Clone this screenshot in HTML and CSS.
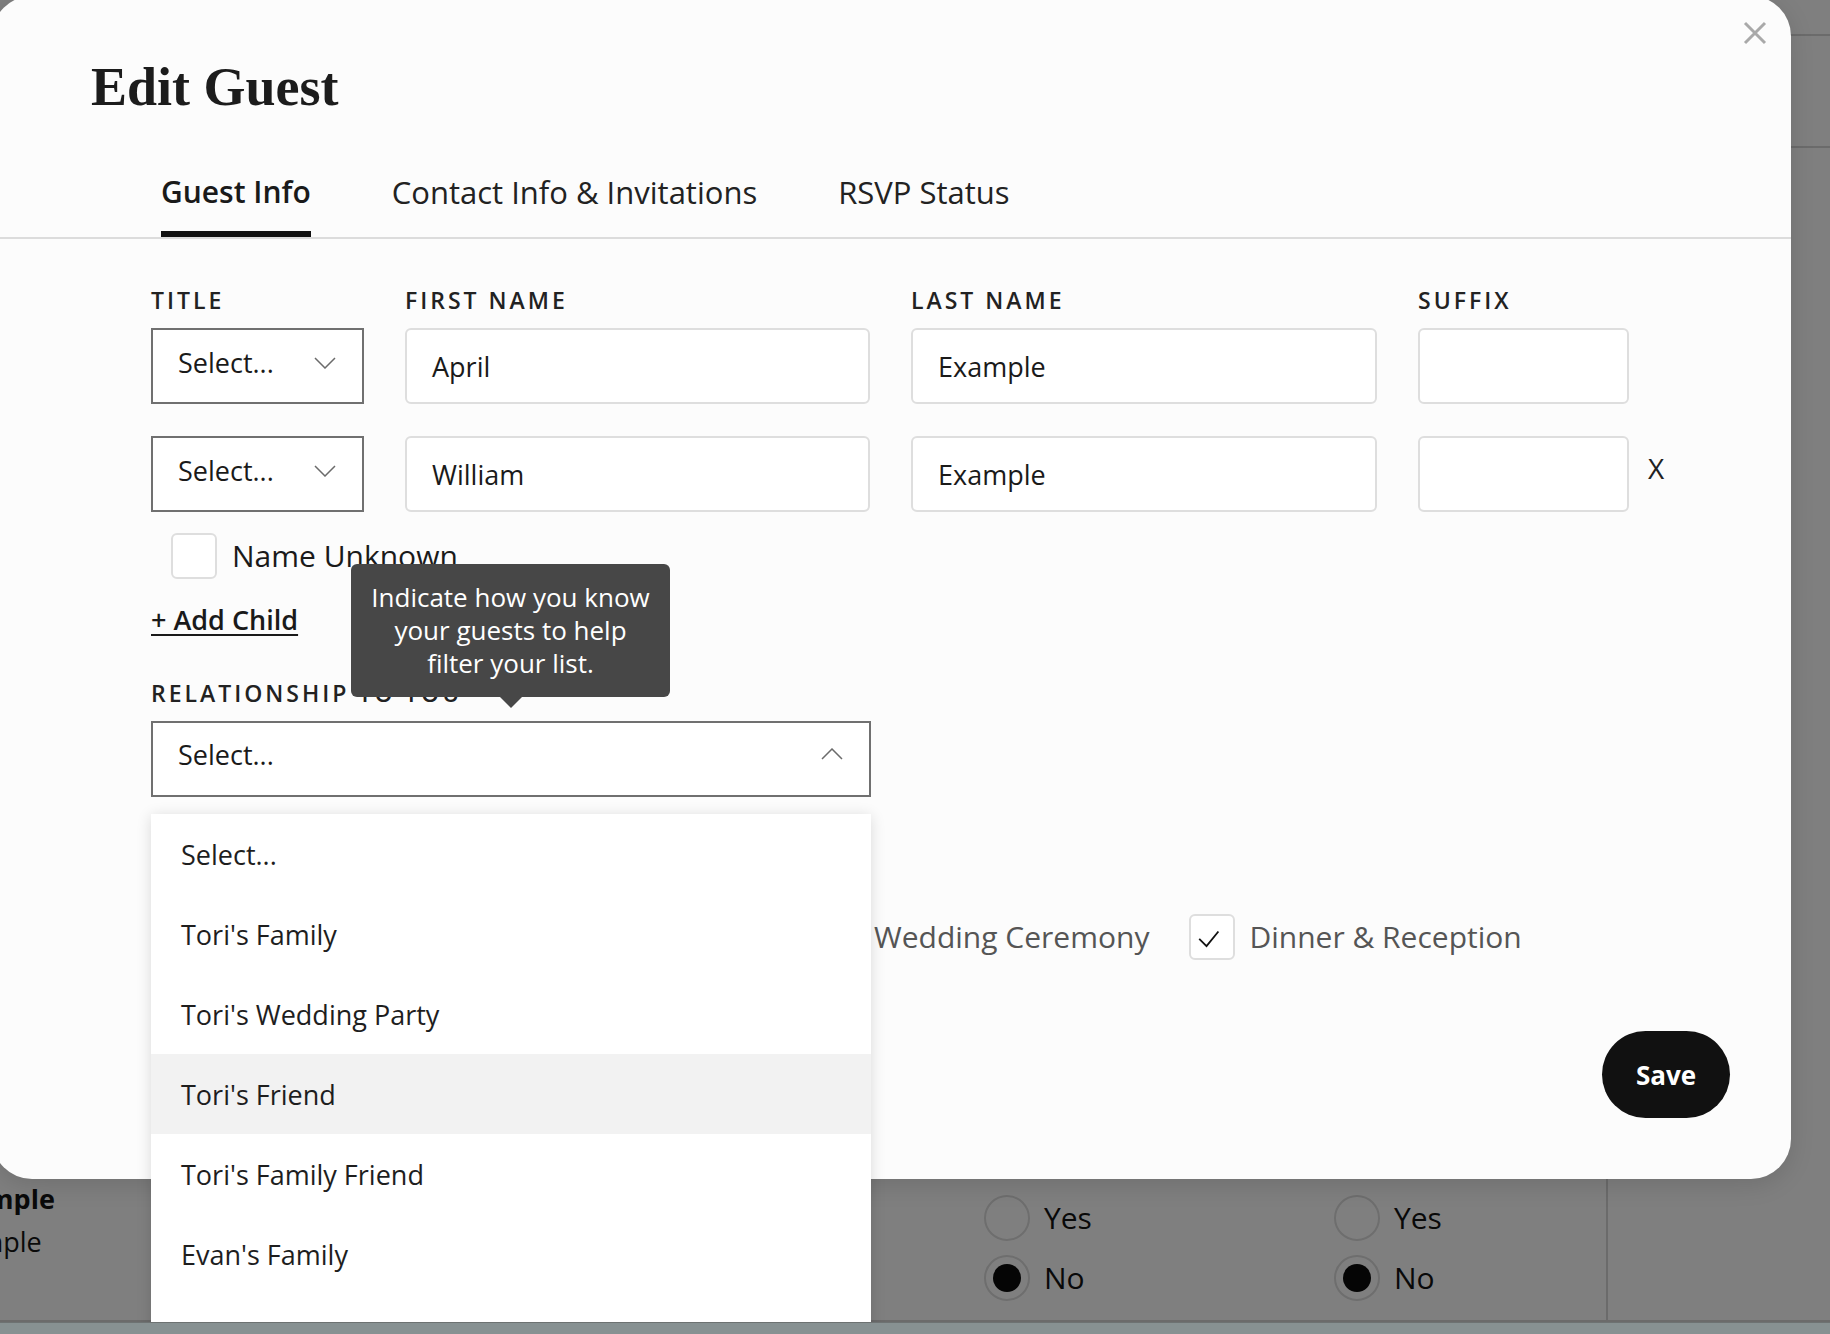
FILE: index.html
```html
<!DOCTYPE html>
<html lang="en">
<head>
<meta charset="utf-8">
<title>Edit Guest</title>
<link rel="stylesheet" href="styles.css">
</head>
<body>
<div class="page">
  <div class="page-row head-row"></div>
  <div class="page-row sub-row"></div>
  <div class="page-row guest-row">
    <div class="g-name">
      <div class="g-primary">Example</div>
      <div class="g-secondary">Example</div>
    </div>
    <div class="rsvp">
      <div class="radio-opt"><span class="radio"></span>Yes</div>
      <div class="radio-opt"><span class="radio on"></span>No</div>
    </div>
    <div class="rsvp">
      <div class="radio-opt"><span class="radio"></span>Yes</div>
      <div class="radio-opt"><span class="radio on"></span>No</div>
    </div>
    <div class="g-end"></div>
  </div>
</div>
<div class="overlay"></div>

<div class="modal">
  <svg class="close" viewBox="0 0 24 24" width="24" height="24"><path d="M2 2 L22 22 M22 2 L2 22" stroke="#a9a9a9" stroke-width="3" fill="none"/></svg>
  <div class="modal-header">
    <h1 class="modal-title">Edit Guest</h1>
  </div>
  <nav class="tabs">
    <div class="tab active">Guest Info</div>
    <div class="tab">Contact Info &amp; Invitations</div>
    <div class="tab">RSVP Status</div>
  </nav>
  <div class="form">
    <div class="grid labels">
      <div class="label">Title</div>
      <div class="label">First Name</div>
      <div class="label">Last Name</div>
      <div class="label">Suffix</div>
    </div>
    <div class="grid name-row">
      <div class="field select"><span>Select...</span><svg class="chev" viewBox="0 0 22 12" width="22" height="12"><polyline points="1,1 11,11 21,1" fill="none" stroke="#6b6b6b" stroke-width="1.5"/></svg></div>
      <div class="field">April</div>
      <div class="field">Example</div>
      <div class="field"></div>
    </div>
    <div class="grid name-row">
      <div class="field select"><span>Select...</span><svg class="chev" viewBox="0 0 22 12" width="22" height="12"><polyline points="1,1 11,11 21,1" fill="none" stroke="#6b6b6b" stroke-width="1.5"/></svg></div>
      <div class="field">William</div>
      <div class="field">Example</div>
      <div class="field"></div>
      <div class="remove">X</div>
    </div>
    <div class="unknown"><span class="checkbox"></span>Name Unknown</div>
    <div class="add-child-row"><span class="add-child">+ Add Child</span></div>
    <div class="rel-field">
      <div class="label rel-label">Relationship to you</div>
      <div class="tooltip">Indicate how you know<br>your guests to help<br>filter your list.</div>
      <div class="rel-select-wrap">
        <div class="field select rel-select"><span>Select...</span><svg class="chev" viewBox="0 0 22 12" width="22" height="12"><polyline points="1,11 11,1 21,11" fill="none" stroke="#6b6b6b" stroke-width="1.5"/></svg></div>
        <div class="menu">
          <div class="menu-item">Select...</div>
          <div class="menu-item">Tori's Family</div>
          <div class="menu-item">Tori's Wedding Party</div>
          <div class="menu-item hover">Tori's Friend</div>
          <div class="menu-item">Tori's Family Friend</div>
          <div class="menu-item">Evan's Family</div>
        </div>
      </div>
    </div>
    <div class="events">
      <div class="event"><span class="checkbox"></span>Wedding Ceremony</div>
      <div class="event"><span class="checkbox"><svg viewBox="0 0 46 46" width="42" height="42"><polyline points="9,25 17,33 30,17" fill="none" stroke="#111" stroke-width="2"/></svg></span>Dinner &amp; Reception</div>
    </div>
  </div>
  <div class="footer">
    <button class="save">Save</button>
  </div>
</div>
<div class="statusbar"></div>
</body>
</html>
```

FILE: styles.css
```css
* { box-sizing: border-box; margin: 0; padding: 0; }
html, body { width: 1830px; height: 1334px; overflow: hidden; }
body {
  position: relative;
  background: #fff;
  font-family: "Open Sans", "Noto Sans", sans-serif;
  color: #1a1a1a;
}

/* background page */
.page { width: 1890px; margin-left: -60px; display: flex; flex-direction: column; background: #fff; }
.page-row { border-bottom: 2px solid #d6d6d6; }
.head-row { height: 36px; }
.sub-row { height: 112px; }
.guest-row {
  height: 1174px;
  display: grid;
  grid-template-columns: 1044px 350px 272px 1fr;
  align-items: end;
}
.g-name { padding-bottom: 60px; color: #141414; }
.g-primary { font-size: 27px; font-weight: 700; line-height: 36px; margin-bottom: 7px; }
.g-secondary { font-size: 27px; line-height: 36px; margin-left: -6px; }
.rsvp { display: flex; flex-direction: column; gap: 14px; padding-bottom: 19px; }
.radio-opt { display: flex; align-items: center; gap: 14px; font-size: 30px; line-height: 46px; color: #121212; }
.radio { width: 46px; height: 46px; border-radius: 50%; border: 2px solid #dcdcdc; background: #fff; display: flex; align-items: center; justify-content: center; }
.radio.on::after { content: ""; width: 28px; height: 28px; border-radius: 50%; background: #0a0a0a; }
.g-end { align-self: stretch; border-left: 2px solid #d6d6d6; }

.overlay { position: absolute; inset: 0; background: rgba(0, 0, 0, 0.5); z-index: 1; }
.statusbar {
  position: absolute; left: 0; right: 0; bottom: 0; height: 12px;
  background: #879192; border-top: 1px solid #6d7272; z-index: 5;
}

/* modal */
.modal {
  position: absolute; left: -8px; top: -4px;
  width: 1799px; height: 1183px;
  background: #fcfcfc;
  border-radius: 40px;
  display: flex; flex-direction: column;
  box-shadow: 0 6px 24px rgba(0, 0, 0, 0.12);
  z-index: 2;
}
.close { position: absolute; top: 25px; right: 24px; }
.modal-header { padding: 64px 0 0 99px; }
.modal-title {
  font-family: "Liberation Serif", "Times New Roman", serif;
  font-weight: 700; font-size: 54px; line-height: 54px; color: #1c1c1c;
}
.tabs { display: flex; gap: 81px; margin-top: 58px; padding-left: 169px; border-bottom: 2px solid #dcdcdc; }
.tab { font-size: 31px; line-height: 40px; padding-bottom: 19px; border-bottom: 6px solid transparent; color: #222; }
.tab.active { font-weight: 600; border-bottom-color: #111; color: #1a1a1a; font-size: 30px; }

.form { padding: 46px 0 0 159px; }
.grid { display: grid; grid-template-columns: 213px 465px 466px 211px auto; column-gap: 41px; align-items: center; }
.label { font-size: 23px; font-weight: 600; letter-spacing: 3px; line-height: 30px; color: #222; text-transform: uppercase; }
.labels { margin-bottom: 13px; }
.name-row + .name-row { margin-top: 32px; }
.field {
  height: 76px; border: 2px solid #dedede; border-radius: 6px; background: #fff;
  font-size: 27px; color: #1a1a1a; padding: 0 25px;
  display: flex; align-items: center;
}
.select { border-color: #707070; border-radius: 0; justify-content: space-between; padding-right: 26px; padding-bottom: 7px; }
.remove { font-size: 28px; margin-left: -22px; color: #222; padding-bottom: 12px; }

.unknown { display: flex; align-items: center; gap: 15px; margin-top: 21px; padding-left: 20px; font-size: 30px; line-height: 46px; }
.checkbox {
  width: 46px; height: 46px; border: 2px solid #dedede; border-radius: 6px; background: #fff;
  display: flex; align-items: center; justify-content: center; flex: none;
}
.add-child-row { margin-top: 23px; line-height: 36px; }
.add-child { font-size: 27px; font-weight: 600; text-decoration: underline; text-decoration-thickness: 2px; text-underline-offset: 4px; color: #1a1a1a; }

.rel-field { position: relative; margin-top: 36px; }
.rel-label { margin-bottom: 13px; }
.tooltip {
  position: absolute; left: 200px; top: -114px; width: 319px;
  padding: 17px 10px; background: #474747; color: #fff;
  font-size: 26px; line-height: 33px; text-align: center; border-radius: 6px; z-index: 4;
}
.tooltip::after {
  content: ""; position: absolute; left: 50%; bottom: -11px; margin-left: -11px;
  border-left: 11px solid transparent; border-right: 11px solid transparent; border-top: 11px solid #474747;
}
.rel-select-wrap { position: relative; width: 720px; }
.rel-select { height: 76px; padding-bottom: 10px; }
.menu {
  position: absolute; left: 0; top: calc(100% + 17px); width: 720px;
  padding-bottom: 60px;
  background: #fff; box-shadow: 0 2px 14px rgba(0, 0, 0, 0.14); z-index: 3;
}
.menu-item { height: 80px; display: flex; align-items: center; padding-left: 30px; font-size: 27px; color: #1e1e1e; }
.menu-item.hover { background: #f2f2f2; }

.events { display: flex; align-items: center; margin-top: 117px; margin-left: 663px; gap: 40px; font-size: 30px; color: #555; }
.event { display: flex; align-items: center; gap: 14px; line-height: 46px; }

.footer { margin-top: auto; display: flex; justify-content: flex-end; padding: 0 61px 61px 0; }
.save {
  width: 128px; height: 87px; border-radius: 44px; border: 0;
  background: #111; color: #fff; font-family: inherit; font-size: 26px; font-weight: 700;
}
```
